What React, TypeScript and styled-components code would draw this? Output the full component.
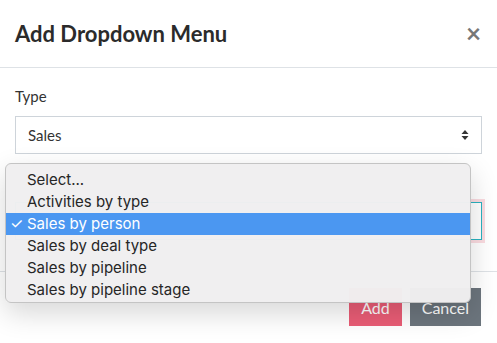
import styled, { createGlobalStyle } from 'styled-components';

const GlobalStyle = createGlobalStyle`
  html, body {
    margin: 0;
    padding: 0;
    background: #ffffff;
  }
  body {
    font-family: Lato, 'Open Sans', sans-serif;
    color: #333;
  }
`;

const Modal = styled.div`
  position: relative;
  width: 497px;
  height: 343px;
  background: #fff;
  overflow: hidden;
`;

const Header = styled.div`
  display: flex;
  align-items: center;
  justify-content: space-between;
  height: 68px;
  padding: 0 16px 0 15px;
  border-bottom: 1px solid #dee2e6;
  box-sizing: border-box;
`;

const Title = styled.h1`
  margin: 0;
  font-size: 22px;
  font-weight: 700;
  color: #2b2b2b;
`;

const Close = styled.span`
  font-size: 26px;
  font-weight: 700;
  color: #777;
  line-height: 1;
  margin-top: -2px;
`;

const Body = styled.div`
  padding: 16px 15px 15px;
`;

const Group = styled.div`
  margin-bottom: 16px;
`;

const Label = styled.div`
  height: 24px;
  font-size: 15px;
  line-height: 24px;
  margin-bottom: 8px;
  color: #333;
`;

const Select = styled.div<{ $focus?: boolean }>`
  display: flex;
  align-items: center;
  justify-content: space-between;
  height: 38px;
  padding: 0 12px;
  border: 1px solid ${(p) => (p.$focus ? '#2bb3c0' : '#ced4da')};
  box-shadow: ${(p) => (p.$focus ? '0 0 0 3px rgba(236, 110, 130, 0.25)' : 'none')};
  box-sizing: border-box;
  font-size: 15px;
  color: #333;
  background: #fff;
`;

const Footer = styled.div`
  display: flex;
  justify-content: flex-end;
  gap: 8px;
  padding: 16px 16px;
  border-top: 1px solid #dee2e6;
`;

const Button = styled.button<{ $variant: 'primary' | 'secondary' }>`
  height: 38px;
  padding: 0 12px;
  border: none;
  font-family: Lato, 'Open Sans', sans-serif;
  font-size: 16px;
  color: #fff;
  background: ${(p) => (p.$variant === 'primary' ? '#ea5d76' : '#6c757d')};
`;

const Menu = styled.div`
  position: absolute;
  left: 5px;
  top: 163px;
  width: 466px;
  height: 140px;
  padding: 5px 0 3px;
  box-sizing: border-box;
  background: rgba(240, 239, 240, 0.98);
  border: 1px solid #c4c4c4;
  border-radius: 6px;
  box-shadow: 0 10px 28px rgba(0, 0, 0, 0.16);
  font-family: Inter, 'Liberation Sans', sans-serif;
`;

const Item = styled.div<{ $active?: boolean }>`
  position: relative;
  height: 22px;
  line-height: 22px;
  padding-left: 21px;
  font-size: 15px;
  color: ${(p) => (p.$active ? '#fff' : '#262626')};
  background: ${(p) => (p.$active ? '#4b97f1' : 'transparent')};
`;

const Check = styled.span`
  position: absolute;
  left: 4px;
  font-size: 15px;
`;

function Arrows() {
  return (
    <svg width="8" height="12" viewBox="0 0 8 12">
      <path d="M4 1 L7.5 5 H0.5 Z" fill="#333" />
      <path d="M4 11 L7.5 7 H0.5 Z" fill="#333" />
    </svg>
  );
}

const options = [
  'Select...',
  'Activities by type',
  'Sales by person',
  'Sales by deal type',
  'Sales by pipeline',
  'Sales by pipeline stage',
];

export default function App() {
  const selected = 'Sales by person';
  return (
    <Modal>
      <GlobalStyle />
      <Header>
        <Title>Add Dropdown Menu</Title>
        <Close>×</Close>
      </Header>
      <Body>
        <Group>
          <Label>Type</Label>
          <Select>
            <span>Sales</span>
            <Arrows />
          </Select>
        </Group>
        {/* second field sits under the open menu, only its frame shows */}
        <Group>
          <Label />
          <Select $focus>
            <span />
            <Arrows />
          </Select>
        </Group>
      </Body>
      <Footer>
        <Button $variant="primary">Add</Button>
        <Button $variant="secondary">Cancel</Button>
      </Footer>
      <Menu>
        {options.map((o) => (
          <Item key={o} $active={o === selected}>
            {o === selected && <Check>✓</Check>}
            {o}
          </Item>
        ))}
      </Menu>
    </Modal>
  );
}
